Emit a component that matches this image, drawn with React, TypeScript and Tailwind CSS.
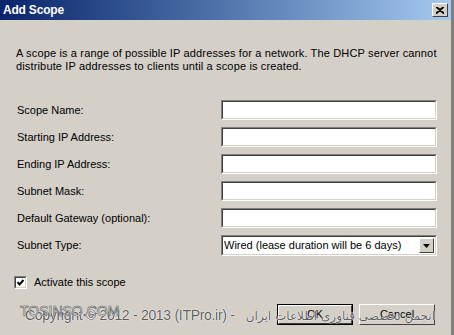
import React from 'react';

const rows = [
  'Scope Name:',
  'Starting IP Address:',
  'Ending IP Address:',
  'Subnet Mask:',
  'Default Gateway (optional):'
];

const sunken =
  'border-t-[#808080] border-l-[#808080] border-b-white border-r-white border';

function TextBox() {
  return (
    <div className={`h-[20px] w-[216px] shrink-0 ${sunken}`}>
      <div className="h-full w-full border border-t-[#404040] border-l-[#404040] border-b-[#d4d0c8] border-r-[#d4d0c8] bg-white" />
    </div>
  );
}

function Button({ label, isDefault }: { label: string; isDefault?: boolean }) {
  return (
    <div
      className={`h-[21px] w-[76px] shrink-0 ${isDefault ? 'border border-black' : ''}`}
    >
      <div className="flex h-full w-full items-center justify-center border border-t-white border-l-white border-b-[#404040] border-r-[#404040] bg-[#d4d0c8] text-[11px] text-black">
        {label}
      </div>
    </div>
  );
}

export default function App() {
  return (
    <div
      className="relative h-[335px] w-[454px] overflow-hidden bg-[#d4d0c8] text-black"
      style={{ fontFamily: '"Liberation Sans", Arial, sans-serif' }}
    >
      <div className="flex h-full flex-col border-r-[3px] border-r-[#808080]">
        {/* title bar */}
        <div className="flex h-[20px] items-center justify-between bg-gradient-to-r from-[#0a246a] to-[#a6caf0] pl-[3px] pr-[3px]">
          <span className="text-[12px] font-bold tracking-[-0.2px] text-white">Add Scope</span>
          <div className="flex h-[14px] w-[16px] items-center justify-center border border-t-white border-l-white border-b-[#404040] border-r-[#404040] bg-[#d4d0c8]">
            <svg width="8" height="7" viewBox="0 0 8 7">
              <path d="M0 0 L8 7 M1 0 L8 6 M8 0 L0 7 M7 0 L0 6" stroke="black" strokeWidth="1.2" />
            </svg>
          </div>
        </div>

        <div className="pl-[16px] pr-[13px]">
          <p className="mt-[27px] whitespace-nowrap text-[11px] leading-[13px] tracking-[0.15px]">
            A scope is a range of possible IP addresses for a network. The DHCP server cannot
            <br />
            distribute IP addresses to clients until a scope is created.
          </p>

          <div className="mt-[27px] flex flex-col gap-[7px]">
            {rows.map((r) => (
              <div key={r} className="flex items-center">
                <span className="w-[205px] shrink-0 pl-[1px] text-[11px]">{r}</span>
                <TextBox />
              </div>
            ))}
            <div className="flex items-center">
              <span className="w-[205px] shrink-0 pl-[1px] text-[11px]">Subnet Type:</span>
              <div className={`h-[21px] w-[216px] shrink-0 ${sunken}`}>
                <div className="flex h-full w-full items-center border border-t-[#404040] border-l-[#404040] border-b-[#d4d0c8] border-r-[#d4d0c8] bg-white pl-[1px] pr-[1px]">
                  <span className="flex-1 text-[11px]">Wired (lease duration will be 6 days)</span>
                  <div className="flex h-[15px] w-[15px] items-center justify-center border border-t-white border-l-white border-b-[#404040] border-r-[#404040] bg-[#d4d0c8]">
                    <svg width="7" height="4" viewBox="0 0 7 4">
                      <path d="M0 0 H7 L3.5 4 Z" fill="black" />
                    </svg>
                  </div>
                </div>
              </div>
            </div>
          </div>

          <div className="mt-[18px] flex items-center gap-[7px]">
            <div className={`-ml-[2px] h-[13px] w-[13px] ${sunken}`}>
              <div className="flex h-full w-full items-center justify-center border border-t-[#404040] border-l-[#404040] border-b-[#d4d0c8] border-r-[#d4d0c8] bg-white">
                <svg width="7" height="7" viewBox="0 0 7 7">
                  <path d="M0.5 3 L2.5 5.5 L6.5 1" stroke="black" strokeWidth="2" fill="none" />
                </svg>
              </div>
            </div>
            <span className="text-[11px]">Activate this scope</span>
          </div>

          <div className="mt-[13px] flex justify-end gap-[6px] pr-[3px]">
            <Button label="OK" isDefault />
            <Button label="Cancel" />
          </div>
        </div>
      </div>

      {/* watermark */}
      <div
        className="absolute left-[25px] top-[307px] flex w-[410px] items-baseline justify-between whitespace-nowrap text-[14px] leading-[16px] text-[#5c5c5c]"
        style={{ textShadow: '0 0 1px #fff, 0 0 1px #fff, 0 0 1px #fff' }}
      >
        <span className="tracking-[-0.3px]">Copyright © 2012  -  2013 (ITPro.ir) -</span>
        <span dir="rtl" className="text-[12px]" style={{ fontFamily: '"DejaVu Sans", sans-serif' }}>
          انجمن تخصصی فناوری اطلاعات ایران
        </span>
      </div>
      <div
        className="absolute left-[20px] top-[303px] text-[14px] leading-[16px] text-white"
        style={{ WebkitTextStroke: '0.6px #555' }}
      >
        TOSINSO.COM
      </div>
    </div>
  );
}
